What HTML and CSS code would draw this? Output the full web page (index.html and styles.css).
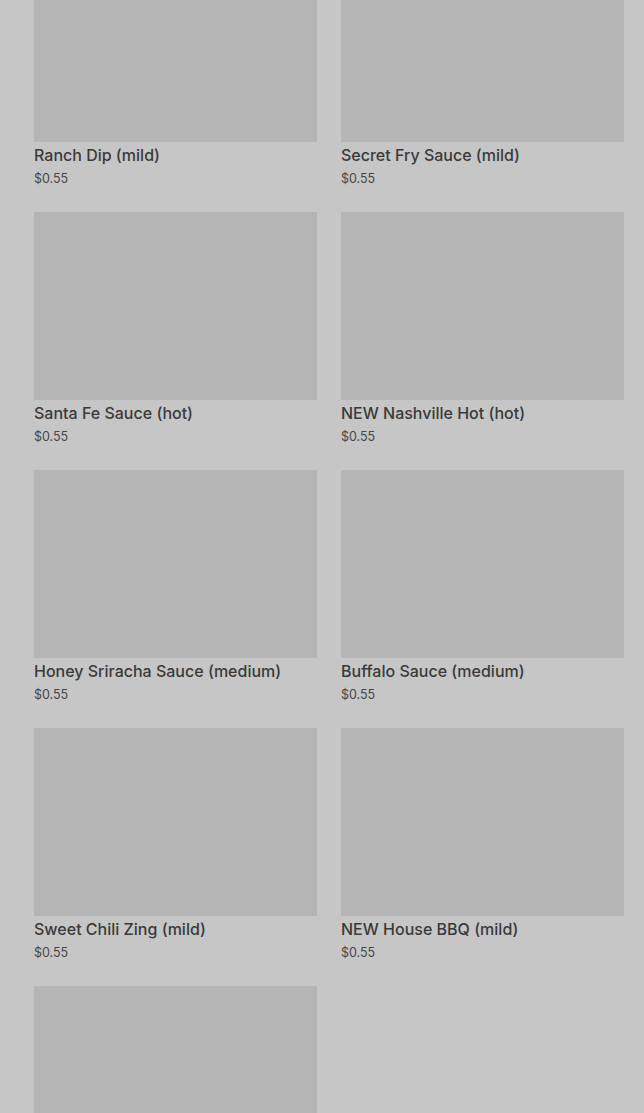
FILE: index.html
```html
<!DOCTYPE html>
<html lang="en">
<head>
  <meta charset="UTF-8">
  <meta name="viewport" content="width=device-width, initial-scale=1.0">
  <title>Sauces</title>
  <link rel="stylesheet" href="styles.css">
</head>
<body>
  <main class="grid">
    <div class="card">
      <div class="thumb"></div>
      <b class="name">Ranch Dip (mild)</b>
      <span class="price">$0.55</span>
    </div>
    <div class="card">
      <div class="thumb"></div>
      <b class="name">Secret Fry Sauce (mild)</b>
      <span class="price">$0.55</span>
    </div>
    <div class="card">
      <div class="thumb"></div>
      <b class="name">Santa Fe Sauce (hot)</b>
      <span class="price">$0.55</span>
    </div>
    <div class="card">
      <div class="thumb"></div>
      <b class="name">NEW Nashville Hot (hot)</b>
      <span class="price">$0.55</span>
    </div>
    <div class="card">
      <div class="thumb"></div>
      <b class="name">Honey Sriracha Sauce (medium)</b>
      <span class="price">$0.55</span>
    </div>
    <div class="card">
      <div class="thumb"></div>
      <b class="name">Buffalo Sauce (medium)</b>
      <span class="price">$0.55</span>
    </div>
    <div class="card">
      <div class="thumb"></div>
      <b class="name">Sweet Chili Zing (mild)</b>
      <span class="price">$0.55</span>
    </div>
    <div class="card">
      <div class="thumb"></div>
      <b class="name">NEW House BBQ (mild)</b>
      <span class="price">$0.55</span>
    </div>
    <div class="card">
      <div class="thumb"></div>
    </div>
  </main>
</body>
</html>
```

FILE: styles.css
```css
body {
  margin: 0;
  background: #c6c6c6;
  font-family: Inter, "Liberation Sans", sans-serif;
  overflow: hidden;
}
.grid {
  display: grid;
  grid-template-columns: repeat(2, 1fr);
  column-gap: 24px;
  row-gap: 23px;
  padding: 0 20px 0 34px;
  margin-top: -46px;
}
.card {
  display: flex;
  flex-direction: column;
}
.thumb {
  height: 188px;
  background: #b5b5b5;
}
.name {
  margin-top: 1px;
  font-size: 16px;
  font-weight: 500;
  line-height: 24px;
  color: #3a3a3a;
}
.price {
  margin-top: 2px;
  font-size: 12.5px;
  line-height: 20px;
  color: #474747;
}
```
